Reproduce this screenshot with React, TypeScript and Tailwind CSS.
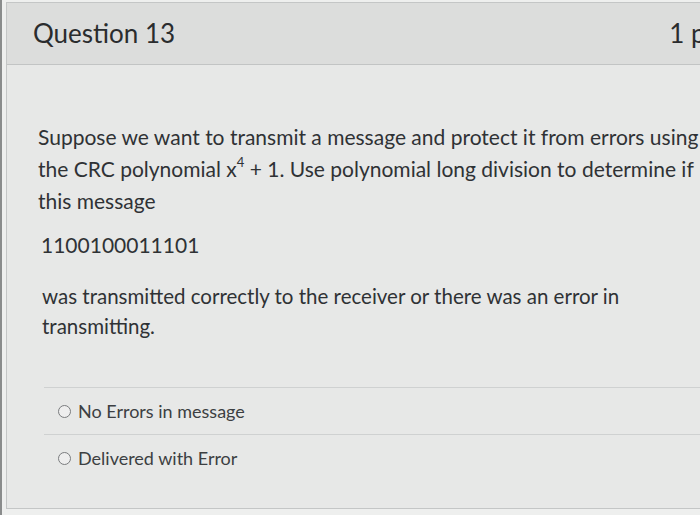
const options = ['No Errors in message', 'Delivered with Error'];

const App = () => {
    return (
        <div
            className="w-[700px] h-[515px] overflow-hidden bg-[#eeefee] border-l-[2px] border-[#8a8c8c] text-[#2f3235]"
            style={{ fontFamily: 'Lato, "Liberation Sans", sans-serif' }}
        >
            <div className="ml-[4px] mt-[2px] w-[733px] border border-[#c4c6c6] bg-[#e7e8e7]">
                <div className="h-[62px] flex items-center justify-between pl-[26px] pr-[12px] bg-[#dcdddc] border-b border-[#c2c4c4]">
                    <h2 className="text-[26px] text-[#2a2c2e]">Question 13</h2>
                    <span className="text-[26px] text-[#2a2c2e]">1 pts</span>
                </div>

                <div className="pt-[56px] pl-[31px]">
                    <p className="w-[668px] text-[21px] leading-[32px]">
                        Suppose we want to transmit a message and protect it from errors using the CRC polynomial x
                        <sup className="text-[13px] leading-none align-top relative top-[3px]">4</sup> + 1. Use polynomial long division to determine if this message
                    </p>
                    <p className="mt-[12px] text-[21px] leading-[32px] pl-[3px]">1100100011101</p>
                    <p className="mt-[20px] w-[665px] text-[20.5px] leading-[30px] pl-[4px]">
                        was transmitted correctly to the receiver or there was an error in transmitting.
                    </p>
                </div>

                <div className="mt-[46px] ml-[37px] pb-[27px]">
                    {options.map((opt) => (
                        <div key={opt} className="h-[47px] flex items-center gap-[7px] pl-[14px] border-t border-[#cfd1d1]">
                            <span className="w-[13px] h-[13px] rounded-full border-[1.5px] border-[#7a7c7e] bg-[#eeeeee]" />
                            <span className="text-[18px] text-[#3c3f42]">{opt}</span>
                        </div>
                    ))}
                </div>
            </div>
        </div>
    );
};

export default App;
